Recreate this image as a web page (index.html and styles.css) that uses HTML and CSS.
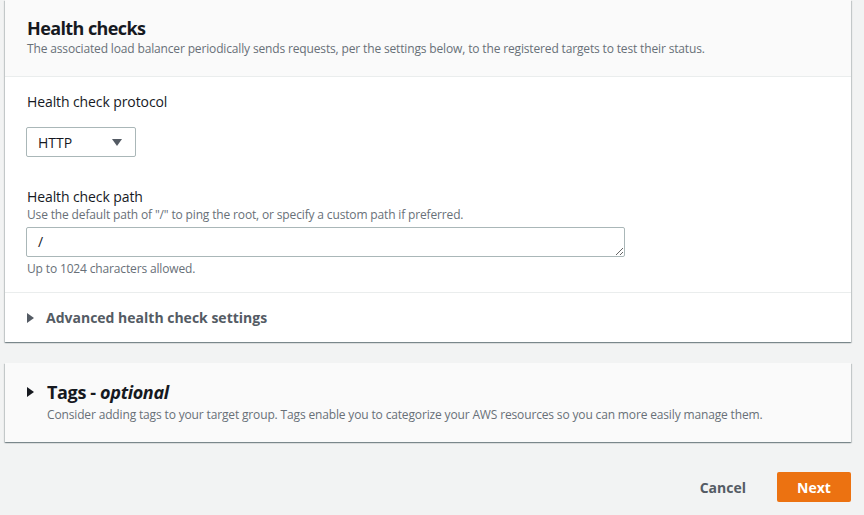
FILE: index.html
```html
<!DOCTYPE html>
<html>
<head>
<meta charset="utf-8">
<link rel="stylesheet" href="styles.css">
</head>
<body>
<div class="page">
  <section class="card">
    <header class="card-head">
      <h2 class="title">Health checks</h2>
      <p class="desc">The associated load balancer periodically sends requests, per the settings below, to the registered targets to test their status.</p>
    </header>
    <div class="card-body">
      <div class="field">
        <div class="label">Health check protocol</div>
        <div class="select"><span>HTTP</span><span class="caret"></span></div>
      </div>
      <div class="field field-path">
        <div class="label">Health check path</div>
        <div class="hint">Use the default path of "/" to ping the root, or specify a custom path if preferred.</div>
        <textarea class="input" rows="1">/</textarea>
        <div class="hint hint-below">Up to 1024 characters allowed.</div>
      </div>
    </div>
    <div class="expander"><span class="tri"></span><span>Advanced health check settings</span></div>
  </section>

  <section class="card card-tags">
    <div class="tags-title"><span class="tri tri-dark"></span><h2 class="title title-tags">Tags - <em>optional</em></h2></div>
    <p class="desc desc-tags">Consider adding tags to your target group. Tags enable you to categorize your AWS resources so you can more easily manage them.</p>
  </section>

  <div class="actions">
    <button class="btn-link">Cancel</button>
    <button class="btn-primary">Next</button>
  </div>
</div>
</body>
</html>
```

FILE: styles.css
```css
* { box-sizing: border-box; }
html, body { margin: 0; padding: 0; background: #f2f3f3; }
body { font-family: "Open Sans", Roboto, Arial, sans-serif; color: #16191f; width: 864px; height: 515px; overflow: hidden; }
.page { padding: 0 13px 0 5px; display: flex; flex-direction: column; }
.card {
  background: #fff;
  box-shadow: 0 1px 1px 0 rgba(0,28,36,.3), 1px 1px 1px 0 rgba(0,28,36,.15), -1px 1px 1px 0 rgba(0,28,36,.15);
}
.card-head { background: #fafafa; padding: 16px 20px 19px 22px; border-bottom: 1px solid #eaeded; }
.title { margin: 0; font-size: 18px; line-height: 24px; font-weight: 700; color: #16191f; letter-spacing: -0.6px; }
.title-tags { letter-spacing: -0.35px; }
.title em { font-style: italic; }
.desc { margin: 1px 0 0; font-size: 12px; line-height: 16px; color: #687078; letter-spacing: -0.15px; }
.card-body { padding: 15px 20px 15px 22px; border-bottom: 1px solid #eaeded; display: flex; flex-direction: column; gap: 30px; }
.field { display: flex; flex-direction: column; }
.label { font-size: 14px; line-height: 20px; color: #16191f; letter-spacing: -0.1px; }
.select {
  margin-top: 15px; width: 110px; height: 30px; border: 1px solid #aab7b8; border-radius: 2px;
  display: flex; align-items: center; justify-content: space-between; padding: 0 13px 0 11px;
  font-size: 14px; color: #16191f; margin-left: -1px;
}
.caret { width: 0; height: 0; border-left: 5px solid transparent; border-right: 5px solid transparent; border-top: 7px solid #545b64; }
.hint { font-size: 12px; line-height: 16px; color: #687078; letter-spacing: -0.15px; }
.input {
  margin: 4px 0 0 -1px; width: 599px; height: 30px; border: 1px solid #aab7b8; border-radius: 2px;
  font-family: inherit; font-size: 14px; line-height: 20px; padding: 4px 11px; color: #16191f;
  resize: both; background: #fff; display: block;
}
.hint-below { margin-top: 4px; }
.expander { height: 49px; display: flex; align-items: center; padding-left: 22px; gap: 12px; font-size: 14px; font-weight: 700; color: #545b64; }
.tri { width: 0; height: 0; border-top: 5px solid transparent; border-bottom: 5px solid transparent; border-left: 7px solid #545b64; }
.tri-dark { border-left-color: #16191f; }
.card-tags { margin-top: 21px; background: #fafafa; padding: 17px 20px 19px 22px; }
.tags-title { display: flex; align-items: center; gap: 13px; }
.desc-tags { padding-left: 20px; margin-top: 3px; }
.actions { display: flex; justify-content: flex-end; align-items: center; margin-top: 30px; gap: 17px; }
.btn-link { background: none; border: 0; font-family: inherit; font-size: 14px; font-weight: 700; color: #545b64; padding: 0 14px; height: 30px; }
.btn-primary { background: #ec7211; border: 0; border-radius: 2px; color: #fff; font-family: inherit; font-size: 14px; font-weight: 700; width: 74px; height: 30px; }
```
